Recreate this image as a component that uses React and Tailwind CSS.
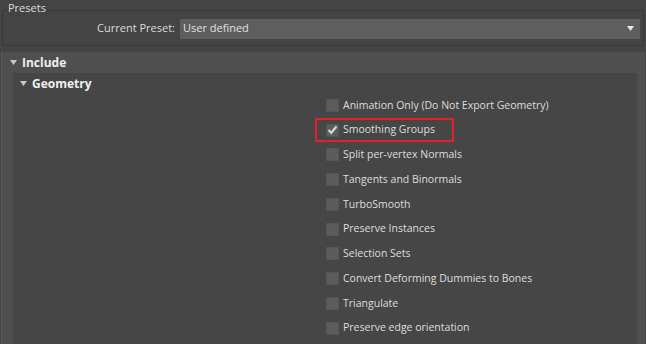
import React from 'react';

const options = [
  { label: 'Animation Only (Do Not Export Geometry)', checked: false },
  { label: 'Smoothing Groups', checked: true, highlight: true },
  { label: 'Split per-vertex Normals', checked: false },
  { label: 'Tangents and Binormals', checked: false },
  { label: 'TurboSmooth', checked: false },
  { label: 'Preserve Instances', checked: false },
  { label: 'Selection Sets', checked: false },
  { label: 'Convert Deforming Dummies to Bones', checked: false },
  { label: 'Triangulate', checked: false },
  { label: 'Preserve edge orientation', checked: false },
];

const Arrow = () => (
  <svg width="7" height="5" viewBox="0 0 7 5" className="shrink-0">
    <path d="M0 0 L7 0 L3.5 5 Z" fill="#c8c8c8" />
  </svg>
);

const CheckRow = ({ label, checked, highlight }) => (
  <div className="relative flex items-center h-[24.75px]">
    {highlight && (
      <div className="absolute left-[-11px] top-[0px] w-[139px] h-[24px] border-2 border-[#e3202b]" />
    )}
    <div className="w-[13px] h-[13px] bg-[#5c5c5c] border border-[#555] flex items-center justify-center">
      {checked && (
        <svg width="11" height="10" viewBox="0 0 11 10">
          <path d="M1.5 5 L4.2 7.8 L9.5 1.5" stroke="#d4d4d4" strokeWidth="2.2" fill="none" />
        </svg>
      )}
    </div>
    <span className="ml-[4px] text-[10.5px] text-[#dedede]">{label}</span>
  </div>
);

export default function App() {
  return (
    <div
      className="w-[646px] h-[344px] overflow-hidden bg-[#444444] pt-[3px]"
      style={{ fontFamily: '"Open Sans", "Noto Sans", sans-serif' }}
    >
      {/* Presets group */}
      <div className="relative mx-[2px] mt-[7px] h-[36px] border border-[#383838] rounded-[2px]">
        <span className="absolute left-[4px] top-[-11px] px-[1px] bg-[#444444] text-[11px] leading-[16px] text-[#dcdcdc]">
          Presets
        </span>
        <div className="flex items-center h-full pt-[1px]">
          <span className="w-[177px] pr-[5px] text-right text-[11px] text-[#dcdcdc]">Current Preset:</span>
          <div className="flex items-center justify-between w-[460px] h-[20px] bg-[#5e5e5e] px-[3px]">
            <span className="text-[11px] text-[#e0e0e0]">User defined</span>
            <svg width="7" height="5" viewBox="0 0 7 5" className="mr-[3px]">
              <path d="M0 0 L7 0 L3.5 5 Z" fill="#e8e8e8" />
            </svg>
          </div>
        </div>
      </div>

      {/* Include rollout */}
      <div className="mt-[6px] mx-[1px] bg-[#4f4f4f] border-l border-[#5a5a5a] h-[300px]">
        <div className="flex items-center gap-[5px] h-[21px] pl-[8px]">
          <Arrow />
          <span className="text-[12px] font-bold text-[#f0f0f0]">Include</span>
        </div>
        <div className="ml-[11px] mr-[8px] bg-[#464646] h-[280px]">
          <div className="flex items-center gap-[5px] h-[21px] pl-[7px]">
            <Arrow />
            <span className="text-[12px] font-bold text-[#f0f0f0]">Geometry</span>
          </div>
          <div className="pl-[313px] -mt-[1px]">
            {options.map((o) => (
              <CheckRow key={o.label} {...o} />
            ))}
          </div>
        </div>
      </div>
    </div>
  );
}
